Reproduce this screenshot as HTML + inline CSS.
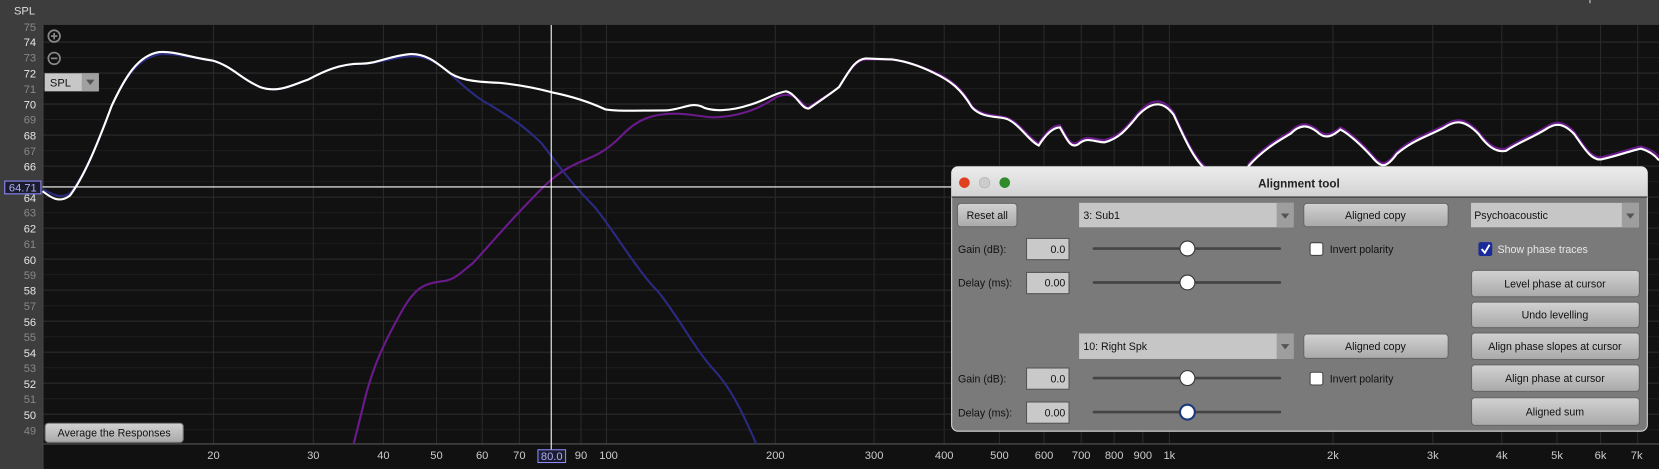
<!DOCTYPE html>
<html><head><meta charset="utf-8"><style>
html,body{margin:0;padding:0;background:#3c3c3c;overflow:hidden}
svg{display:block}
text{font-family:"Liberation Sans",sans-serif}
</style></head><body>
<svg width="1659" height="469" viewBox="0 0 1562 441.6" preserveAspectRatio="none" xmlns="http://www.w3.org/2000/svg">
<defs>
<linearGradient id="btn" x1="0" y1="0" x2="0" y2="1"><stop offset="0" stop-color="#d2d2d2"/><stop offset="1" stop-color="#a9a9a9"/></linearGradient>
<linearGradient id="tb" x1="0" y1="0" x2="0" y2="1"><stop offset="0" stop-color="#ececec"/><stop offset="1" stop-color="#d3d3d3"/></linearGradient>
</defs>
<rect x="0" y="0" width="1562" height="442" fill="#3d3d3d"/>
<line x1="1497" y1="0" x2="1497" y2="3" stroke="#ccc"/>
<rect x="40.5" y="23.5" width="1522" height="418" fill="#111"/>
<!-- horizontal grid -->
<g stroke-width="1">
<g stroke="#2c2c2c">
<line x1="40" x2="1562" y1="39.6" y2="39.6"/><line x1="40" x2="1562" y1="68.8" y2="68.8"/><line x1="40" x2="1562" y1="98" y2="98"/><line x1="40" x2="1562" y1="127.2" y2="127.2"/><line x1="40" x2="1562" y1="156.4" y2="156.4"/><line x1="40" x2="1562" y1="185.6" y2="185.6"/><line x1="40" x2="1562" y1="214.8" y2="214.8"/><line x1="40" x2="1562" y1="244" y2="244"/><line x1="40" x2="1562" y1="273.2" y2="273.2"/><line x1="40" x2="1562" y1="302.4" y2="302.4"/><line x1="40" x2="1562" y1="331.6" y2="331.6"/><line x1="40" x2="1562" y1="360.8" y2="360.8"/><line x1="40" x2="1562" y1="390" y2="390"/>
</g>
<g stroke="#1d1d1d">
<line x1="40" x2="1562" y1="54.2" y2="54.2"/><line x1="40" x2="1562" y1="83.4" y2="83.4"/><line x1="40" x2="1562" y1="112.6" y2="112.6"/><line x1="40" x2="1562" y1="141.8" y2="141.8"/><line x1="40" x2="1562" y1="171" y2="171"/><line x1="40" x2="1562" y1="200.2" y2="200.2"/><line x1="40" x2="1562" y1="229.4" y2="229.4"/><line x1="40" x2="1562" y1="258.6" y2="258.6"/><line x1="40" x2="1562" y1="287.8" y2="287.8"/><line x1="40" x2="1562" y1="317" y2="317"/><line x1="40" x2="1562" y1="346.2" y2="346.2"/><line x1="40" x2="1562" y1="375.4" y2="375.4"/><line x1="40" x2="1562" y1="404.6" y2="404.6"/>
</g>
<g stroke="#2a2a2a">
<line y1="23.5" y2="418" x1="201" x2="201"/><line y1="23.5" y2="418" x1="295" x2="295"/><line y1="23.5" y2="418" x1="361" x2="361"/><line y1="23.5" y2="418" x1="411" x2="411"/><line y1="23.5" y2="418" x1="454" x2="454"/><line y1="23.5" y2="418" x1="489" x2="489"/><line y1="23.5" y2="418" x1="547" x2="547"/><line y1="23.5" y2="418" x1="571" x2="571"/><line y1="23.5" y2="418" x1="730" x2="730"/><line y1="23.5" y2="418" x1="823" x2="823"/><line y1="23.5" y2="418" x1="889" x2="889"/><line y1="23.5" y2="418" x1="941" x2="941"/><line y1="23.5" y2="418" x1="983" x2="983"/><line y1="23.5" y2="418" x1="1018" x2="1018"/><line y1="23.5" y2="418" x1="1049" x2="1049"/><line y1="23.5" y2="418" x1="1076" x2="1076"/><line y1="23.5" y2="418" x1="1101" x2="1101"/><line y1="23.5" y2="418" x1="1255" x2="1255"/><line y1="23.5" y2="418" x1="1349" x2="1349"/><line y1="23.5" y2="418" x1="1414" x2="1414"/><line y1="23.5" y2="418" x1="1466" x2="1466"/><line y1="23.5" y2="418" x1="1507" x2="1507"/><line y1="23.5" y2="418" x1="1542" x2="1542"/>
</g>
</g>
<line x1="40" x2="1562" y1="418" y2="418" stroke="#555"/>
<line x1="40.5" x2="40.5" y1="23.5" y2="442" stroke="#444"/>

<!-- curves -->
<path fill="none" stroke="#6a1a8a" stroke-width="2" d="M333,418 L345,370 C352,345 360,325 380,290 C392,270 400,267 415,265 C428,264 432,258 445,248 C460,232 480,208 500,188 C515,172 525,162 545,153 C560,147 570,143 585,128 C600,112 615,107 635,107 C655,107 665,112 680,110 C700,108 715,102 730,92 C742,86 750,90 760,102 C768,96 780,90 790,82 C800,66 805,57 815,56 L840,56 C855,58 870,64 880,68 C895,75 905,82 915,100 C925,110 940,108 948,111 C960,115 968,130 978,135 C985,124 992,118 998,118 C1005,130 1008,138 1015,134 C1024,126 1030,132 1040,132 C1055,128 1062,118 1072,106 C1085,92 1095,92 1105,106 C1115,128 1125,150 1135,157 M1175,155 C1190,138 1205,130 1215,124 C1225,114 1232,116 1240,122 C1248,130 1255,126 1262,120 C1270,124 1282,135 1292,146 C1300,156 1305,157 1315,143 C1330,130 1345,126 1360,118 C1372,110 1380,112 1392,124 C1400,135 1408,142 1418,140 C1430,132 1442,128 1455,120 C1465,113 1472,114 1482,124 C1490,135 1498,150 1508,148 C1522,145 1535,140 1545,138 C1552,140 1558,143 1562,148"/>
<path fill="none" stroke="#2a2a80" stroke-width="2" d="M40,178 C48,182 56,188 66,182 C80,165 92,135 105,100 C118,72 130,55 150,51 C165,50 178,54 200,57 C218,62 228,75 245,82 C262,88 275,80 290,75 C305,67 320,60 340,60 C355,60 365,55 385,53 C400,52 410,58 420,66 C430,75 445,90 460,98 C480,110 495,120 510,135 C525,155 540,175 560,195 C580,220 600,255 620,275 C640,300 655,330 672,348 C688,365 700,390 712,418"/>
<path fill="none" stroke="#ffffff" stroke-width="2" d="M40,180 C48,186 56,192 66,184 C80,165 92,135 105,100 C118,72 130,52 150,49 C165,48 178,54 200,57 C218,62 228,75 245,82 C262,88 275,80 290,75 C305,67 320,60 340,60 C355,60 365,53 385,51 C400,50 410,58 420,66 C430,75 445,77 470,78 C490,80 505,83 520,87 C540,91 555,96 570,103 C585,105 600,104 625,104 C640,104 650,96 660,100 C670,106 690,104 705,99 C720,95 728,88 740,86 C750,88 755,104 762,102 C770,96 780,90 790,82 C800,66 805,56 815,55 L840,56 C855,58 870,64 880,69 C895,76 905,84 915,101 C925,112 940,109 948,112 C960,117 968,132 978,137 C985,126 992,120 998,120 C1005,132 1008,140 1015,136 C1024,128 1030,134 1040,134 C1055,130 1062,120 1072,108 C1085,95 1095,95 1105,108 C1115,130 1125,152 1135,159 M1175,157 C1190,140 1205,132 1215,126 C1225,116 1232,118 1240,124 C1248,132 1255,128 1262,122 C1270,126 1282,137 1292,148 C1300,158 1305,159 1315,145 C1330,132 1345,128 1360,120 C1372,112 1380,114 1392,126 C1400,137 1408,144 1418,142 C1430,134 1442,130 1455,122 C1465,115 1472,116 1482,126 C1490,137 1498,152 1508,150 C1522,147 1535,142 1545,140 C1552,142 1558,146 1562,151"/>

<!-- crosshairs -->
<line x1="40" x2="900" y1="176" y2="176" stroke="#fff" stroke-width="1"/>
<line x1="519" x2="519" y1="23.5" y2="424" stroke="#fff" stroke-width="1"/>

<!-- y axis labels -->
<g font-size="10.5" text-anchor="end">
<text x="33" y="13.5" fill="#ddd">SPL</text>
<g fill="#888"><text x="34" y="29">75</text><text x="34" y="58">73</text><text x="34" y="87.5">71</text><text x="34" y="116.5">69</text><text x="34" y="146">67</text><text x="34" y="204">63</text><text x="34" y="233.5">61</text><text x="34" y="262.5">59</text><text x="34" y="292">57</text><text x="34" y="321">55</text><text x="34" y="350.5">53</text><text x="34" y="379.5">51</text><text x="34" y="409">49</text></g>
<g fill="#e6e6e6"><text x="34" y="43.5">74</text><text x="34" y="73">72</text><text x="34" y="102">70</text><text x="34" y="131.5">68</text><text x="34" y="160.5">66</text><text x="34" y="190">64</text><text x="34" y="219">62</text><text x="34" y="248.5">60</text><text x="34" y="277.5">58</text><text x="34" y="307">56</text><text x="34" y="336">54</text><text x="34" y="365.5">52</text><text x="34" y="394.5">50</text></g>
</g>
<rect x="4.5" y="170.5" width="34" height="12" fill="#1c1c2c" stroke="#8a8aff"/>
<text x="21.5" y="180.5" font-size="10.5" fill="#aab0ff" text-anchor="middle">64.71</text>

<!-- zoom icons -->
<g stroke="#888" fill="none" stroke-width="1.6">
<circle cx="51" cy="34" r="5.5"/><line x1="48" x2="54" y1="34" y2="34"/><line x1="51" x2="51" y1="31" y2="37"/>
<circle cx="51" cy="55" r="5.5"/><line x1="48" x2="54" y1="55" y2="55"/>
</g>
<rect x="42" y="69" width="51" height="17" fill="#c7c7c7"/>
<rect x="77" y="69" width="16" height="17" fill="#a0a0a0"/>
<text x="47" y="81.5" font-size="10.5" fill="#111">SPL</text>
<path d="M81,75 L89,75 L85,80 Z" fill="#555"/>

<!-- average button -->
<rect x="42.5" y="398.5" width="130" height="18" rx="3" fill="url(#btn)" stroke="#777"/>
<text x="107.5" y="411" font-size="10" fill="#111" text-anchor="middle">Average the Responses</text>

<!-- x labels -->
<g font-size="10.5" fill="#ccc" text-anchor="middle">
<text x="201" y="432">20</text><text x="295" y="432">30</text><text x="361" y="432">40</text><text x="411" y="432">50</text><text x="454" y="432">60</text><text x="489" y="432">70</text><text x="547" y="432">90</text><text x="573" y="432">100</text><text x="730" y="432">200</text><text x="823" y="432">300</text><text x="889" y="432">400</text><text x="941" y="432">500</text><text x="983" y="432">600</text><text x="1018" y="432">700</text><text x="1049" y="432">800</text><text x="1076" y="432">900</text><text x="1101" y="432">1k</text><text x="1255" y="432">2k</text><text x="1349" y="432">3k</text><text x="1414" y="432">4k</text><text x="1466" y="432">5k</text><text x="1507" y="432">6k</text><text x="1541" y="432">7k</text>
</g>
<rect x="506.5" y="423.5" width="26" height="12" fill="#1c1c2c" stroke="#8a8aff"/>
<text x="519.5" y="433" font-size="10.5" fill="#aab0ff" text-anchor="middle">80.0</text>

<!-- dialog -->
<rect x="896" y="157" width="655" height="249" rx="6" fill="#7a7a7a" stroke="#d8d8d8"/>
<path d="M896,185 L896,163 Q896,157 902,157 L1545,157 Q1551,157 1551,163 L1551,185 Z" fill="url(#tb)"/>
<line x1="896" x2="1551" y1="185.5" y2="185.5" stroke="#222"/>
<circle cx="908" cy="172" r="5" fill="#e0401f"/><circle cx="927" cy="172" r="5" fill="#ccc" stroke="#aaa" stroke-width=".5"/><circle cx="946" cy="172" r="5" fill="#2f8a2a"/>
<text x="1223" y="176.5" font-size="11" font-weight="bold" fill="#222" text-anchor="middle">Alignment tool</text>

<g font-size="10" fill="#111">
<rect x="901.5" y="191.5" width="56" height="22" rx="3" fill="url(#btn)" stroke="#666"/>
<text x="929.5" y="206" text-anchor="middle">Reset all</text>

<rect x="1016" y="191" width="202" height="23" fill="#c6c6c6"/><rect x="1202" y="191" width="16" height="23" fill="#9e9e9e"/>
<path d="M1206,201 L1214,201 L1210,206 Z" fill="#555"/>
<text x="1020" y="206">3: Sub1</text>
<rect x="1227.5" y="191.5" width="136" height="22" rx="3" fill="url(#btn)" stroke="#666"/>
<text x="1295" y="206" text-anchor="middle">Aligned copy</text>
<rect x="1385" y="191" width="158" height="23" fill="#c6c6c6"/><rect x="1527" y="191" width="16" height="23" fill="#9e9e9e"/>
<path d="M1531,201 L1539,201 L1535,206 Z" fill="#555"/>
<text x="1388" y="206">Psychoacoustic</text>

<text x="902" y="238">Gain (dB):</text>
<rect x="966.5" y="224.5" width="40" height="20" fill="#c9c9c9" stroke="#555"/>
<text x="1003" y="238" text-anchor="end">0.0</text>
<line x1="1030" x2="1205" y1="234" y2="234" stroke="#444" stroke-width="2.5" stroke-linecap="round"/>
<circle cx="1118" cy="234" r="7" fill="#fff" stroke="#333"/>
<rect x="1233.5" y="228.5" width="12" height="12" rx="2" fill="#fff" stroke="#444"/>
<text x="1252" y="238">Invert polarity</text>
<rect x="1392" y="228" width="13" height="13" rx="2" fill="#1a2a9a"/>
<path d="M1395,234.5 L1398,238 L1402.5,230.5" stroke="#fff" stroke-width="1.8" fill="none"/>
<text x="1410" y="238" fill="#e8e8e8">Show phase traces</text>

<text x="902" y="270">Delay (ms):</text>
<rect x="966.5" y="256.5" width="40" height="20" fill="#c9c9c9" stroke="#555"/>
<text x="1003" y="270" text-anchor="end">0.00</text>
<line x1="1030" x2="1205" y1="266" y2="266" stroke="#444" stroke-width="2.5" stroke-linecap="round"/>
<circle cx="1118" cy="266" r="7" fill="#fff" stroke="#333"/>
<rect x="1385.5" y="254.5" width="158" height="25" rx="3" fill="url(#btn)" stroke="#666"/>
<text x="1464" y="270.5" text-anchor="middle">Level phase at cursor</text>
<rect x="1385.5" y="284.5" width="158" height="24" rx="3" fill="url(#btn)" stroke="#666"/>
<text x="1464" y="300" text-anchor="middle">Undo levelling</text>

<rect x="1016" y="314" width="202" height="24" fill="#c6c6c6"/><rect x="1202" y="314" width="16" height="24" fill="#9e9e9e"/>
<path d="M1206,324 L1214,324 L1210,329 Z" fill="#555"/>
<text x="1020" y="329.5">10: Right Spk</text>
<rect x="1227.5" y="314.5" width="136" height="23" rx="3" fill="url(#btn)" stroke="#666"/>
<text x="1295" y="329.5" text-anchor="middle">Aligned copy</text>
<rect x="1385.5" y="313.5" width="158" height="25" rx="3" fill="url(#btn)" stroke="#666"/>
<text x="1464" y="329.5" text-anchor="middle">Align phase slopes at cursor</text>

<text x="902" y="360">Gain (dB):</text>
<rect x="966.5" y="346.5" width="40" height="20" fill="#c9c9c9" stroke="#555"/>
<text x="1003" y="360" text-anchor="end">0.0</text>
<line x1="1030" x2="1205" y1="356" y2="356" stroke="#444" stroke-width="2.5" stroke-linecap="round"/>
<circle cx="1118" cy="356" r="7" fill="#fff" stroke="#333"/>
<rect x="1233.5" y="350.5" width="12" height="12" rx="2" fill="#fff" stroke="#444"/>
<text x="1252" y="360">Invert polarity</text>
<rect x="1385.5" y="343.5" width="158" height="25" rx="3" fill="url(#btn)" stroke="#666"/>
<text x="1464" y="359.5" text-anchor="middle">Align phase at cursor</text>

<text x="902" y="392">Delay (ms):</text>
<rect x="966.5" y="378.5" width="40" height="20" fill="#c9c9c9" stroke="#555"/>
<text x="1003" y="392" text-anchor="end">0.00</text>
<line x1="1030" x2="1205" y1="388" y2="388" stroke="#444" stroke-width="2.5" stroke-linecap="round"/>
<circle cx="1118" cy="388" r="7" fill="#fff" stroke="#1a3a7a" stroke-width="2"/>
<rect x="1385.5" y="374.5" width="158" height="26" rx="3" fill="url(#btn)" stroke="#666"/>
<text x="1464" y="391" text-anchor="middle">Aligned sum</text>
</g>
</svg>
</body></html>
